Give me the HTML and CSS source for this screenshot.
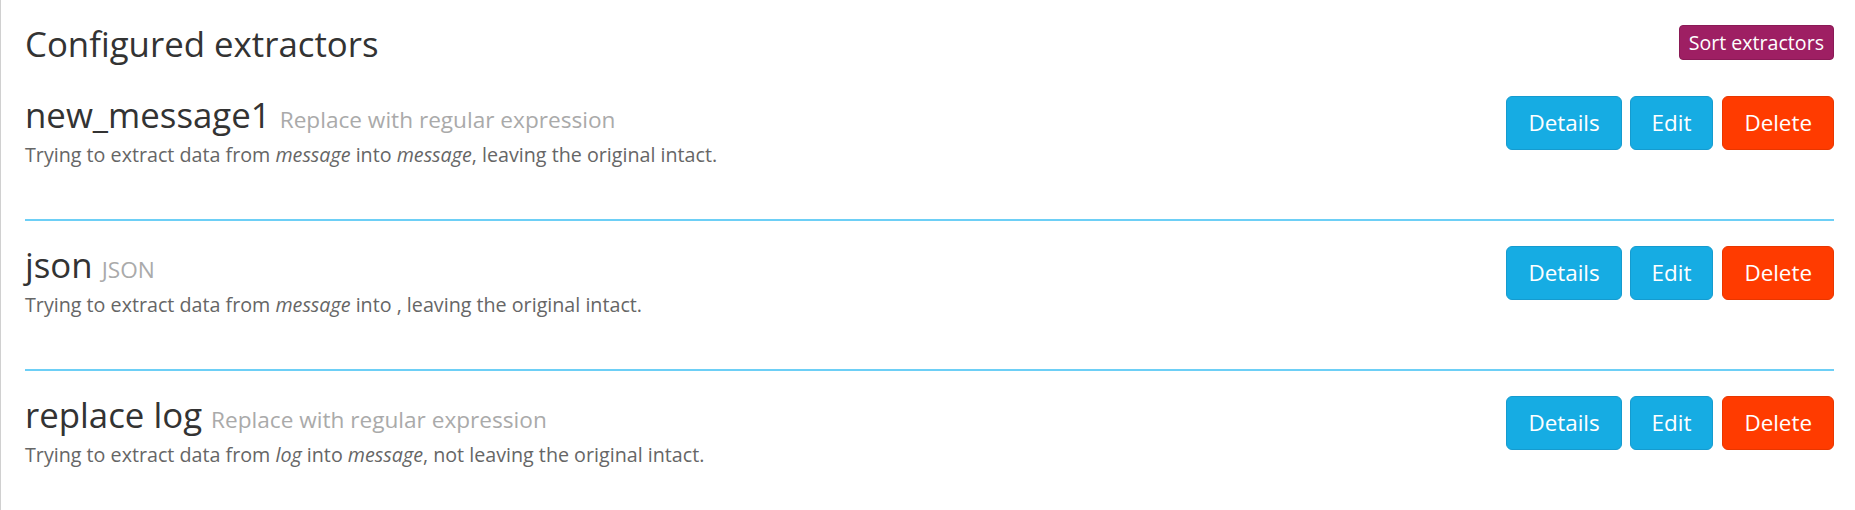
FILE: index.html
```html
<!DOCTYPE html>
<html lang="en">
<head>
<meta charset="utf-8">
<title>Configured extractors</title>
<link rel="stylesheet" href="styles.css">
</head>
<body>
<div class="page">
  <div class="header">
    <h2 class="heading">Configured extractors</h2>
    <button class="btn btn-sort" type="button">Sort extractors</button>
  </div>

  <div class="extractor">
    <div class="info">
      <h2 class="title">new_message1 <small>Replace with regular expression</small></h2>
      <p class="desc">Trying to extract data from <em>message</em> into <em>message</em>, leaving the original intact.</p>
    </div>
    <div class="actions">
      <button class="btn btn-info" type="button">Details</button>
      <button class="btn btn-info" type="button">Edit</button>
      <button class="btn btn-danger" type="button">Delete</button>
    </div>
  </div>

  <div class="extractor">
    <div class="info">
      <h2 class="title">json <small>JSON</small></h2>
      <p class="desc">Trying to extract data from <em>message</em> into , leaving the original intact.</p>
    </div>
    <div class="actions">
      <button class="btn btn-info" type="button">Details</button>
      <button class="btn btn-info" type="button">Edit</button>
      <button class="btn btn-danger" type="button">Delete</button>
    </div>
  </div>

  <div class="extractor">
    <div class="info">
      <h2 class="title">replace log <small>Replace with regular expression</small></h2>
      <p class="desc">Trying to extract data from <em>log</em> into <em>message</em>, not leaving the original intact.</p>
    </div>
    <div class="actions">
      <button class="btn btn-info" type="button">Details</button>
      <button class="btn btn-info" type="button">Edit</button>
      <button class="btn btn-danger" type="button">Delete</button>
    </div>
  </div>
</div>
</body>
</html>
```
FILE: styles.css
```css
html, body {
  margin: 0;
  padding: 0;
  background: #fff;
}

body {
  font-family: "Open Sans", "DejaVu Sans", sans-serif;
  color: #666;
  font-size: 19.7px;
  line-height: 28px;
}

.page {
  min-height: 100vh;
  box-sizing: border-box;
  border-left: 1px solid #d0d0d0;
  padding: 25px 21px 0 24px;
}

.header {
  display: flex;
  justify-content: space-between;
  align-items: flex-start;
  margin-bottom: 9px;
}

.heading,
.title {
  margin: 0;
  font-weight: 400;
  font-size: 34.8px;
  line-height: 37px;
  color: #333;
}

.title small {
  font-size: 65%;
  line-height: 1;
  color: #aaa;
  font-weight: 400;
}

.extractor {
  display: flex;
  justify-content: space-between;
  align-items: flex-start;
  padding: 25px 0 50px;
  border-bottom: 2px solid #6dcff6;
}

.title {
  margin-bottom: 8px;
}

.desc {
  margin: 0;
  color: #666;
}

.desc em {
  font-style: italic;
}

.actions {
  display: flex;
  gap: 8px;
}

.btn {
  font-family: "Open Sans", "DejaVu Sans", sans-serif;
  color: #fff;
  border: 1px solid transparent;
  cursor: pointer;
  margin: 0;
}

.btn-info,
.btn-danger {
  font-size: 22.4px;
  line-height: 30px;
  padding: 11px 21px;
  border-radius: 6px;
}

.btn-info {
  background: #16ace3;
  border-color: #159bcf;
}

.btn-danger {
  background: #ff3b00;
  border-color: #e83600;
  margin-left: 1px;
}

.btn-sort {
  font-size: 19.6px;
  line-height: 29px;
  padding: 2px 9px;
  border-radius: 4px;
  background: #9e1f63;
  border-color: #8a1a56;
}
```
